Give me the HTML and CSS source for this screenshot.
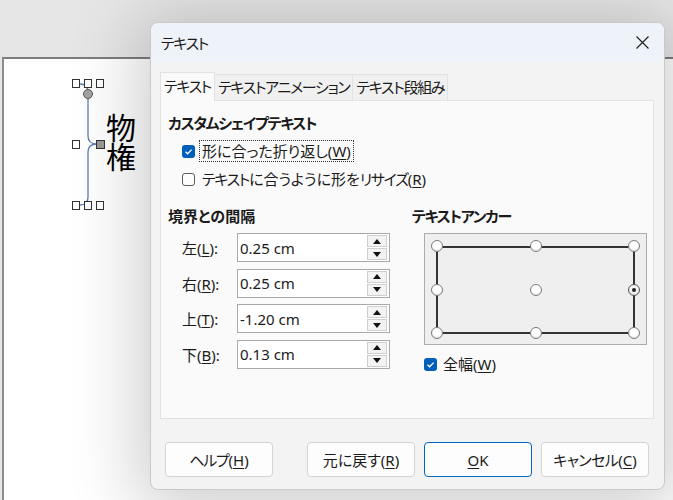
FILE: index.html
```html
<!DOCTYPE html>
<html lang="ja">
<head>
<meta charset="utf-8">
<title>テキスト</title>
<link rel="stylesheet" href="styles.css">
</head>
<body>
<div class="app">
  <div class="toparea"></div>
  <div class="page">
    <svg class="shape" width="120" height="160" viewBox="4 59 120 160">
      <path d="M80 84 Q88 84 88 92 L88 136 Q88 144 97 144 Q88 144 88 152 L88 197 Q88 205 80 205" fill="none" stroke="#5a7fb4" stroke-width="1.3"/>
      <rect x="72.5" y="79.5" width="7" height="8" fill="#fff" stroke="#333" stroke-width="1"/>
      <rect x="84.5" y="79.5" width="7" height="8" fill="#fff" stroke="#333" stroke-width="1"/>
      <rect x="96.5" y="79.5" width="7" height="8" fill="#fff" stroke="#333" stroke-width="1"/>
      <circle cx="88" cy="94" r="4.5" fill="#a3a3a3" stroke="#555" stroke-width="1"/>
      <rect x="72.5" y="140.5" width="7" height="8" fill="#fff" stroke="#333" stroke-width="1"/>
      <rect x="96.5" y="140.5" width="8" height="8" fill="#9a9a9a" stroke="#333" stroke-width="1"/>
      <rect x="72.5" y="201.5" width="7" height="8" fill="#fff" stroke="#333" stroke-width="1"/>
      <rect x="84.5" y="201.5" width="7" height="8" fill="#fff" stroke="#333" stroke-width="1"/>
      <rect x="96.5" y="201.5" width="7" height="8" fill="#fff" stroke="#333" stroke-width="1"/>
    </svg>
    <div class="shape-text">物権</div>
  </div>

  <div class="dialog">
    <div class="titlebar">
      <span class="title k">テキスト</span>
      <svg class="close" width="13" height="13" viewBox="0 0 13 13"><path d="M0.5 0.5 L12.5 12.5 M12.5 0.5 L0.5 12.5" stroke="#222" stroke-width="1.2" fill="none"/></svg>
    </div>
    <div class="dlg-body">
      <div class="tabs">
        <div class="tab active k">テキスト</div>
        <div class="tab k">テキストアニメーション</div>
        <div class="tab k">テキスト段組み</div>
      </div>
      <div class="panel">
        <div class="sec-title k">カスタムシェイプテキスト</div>
        <div class="check-row row-first">
          <span class="cb checked"><svg width="13" height="13" viewBox="0 0 13 13"><path d="M3.5 6.8 L5.6 8.8 L9.6 4.6" stroke="#fff" stroke-width="1.3" fill="none"/></svg></span>
          <span class="focus">形に合った折り返し(<u>W</u>)</span>
        </div>
        <div class="check-row row-second">
          <span class="cb"></span>
          <span class="cb-label"><span class="k">テキスト</span>に合うように形を<span class="k">リサイズ</span>(<u>R</u>)</span>
        </div>
        <div class="cols">
          <div class="col-left">
            <div class="sec-title">境界との間隔</div>
            <div class="fields">
              <div class="field">
                <span class="flabel">左(<u>L</u>):</span>
                <div class="spin"><span class="val">0.25 cm</span><div class="spin-btns"><span class="sb"><i class="tri-up"></i></span><span class="sb"><i class="tri-down"></i></span></div></div>
              </div>
              <div class="field">
                <span class="flabel">右(<u>R</u>):</span>
                <div class="spin"><span class="val">0.25 cm</span><div class="spin-btns"><span class="sb"><i class="tri-up"></i></span><span class="sb"><i class="tri-down"></i></span></div></div>
              </div>
              <div class="field">
                <span class="flabel">上(<u>T</u>):</span>
                <div class="spin"><span class="val">-1.20 cm</span><div class="spin-btns"><span class="sb"><i class="tri-up"></i></span><span class="sb"><i class="tri-down"></i></span></div></div>
              </div>
              <div class="field">
                <span class="flabel">下(<u>B</u>):</span>
                <div class="spin"><span class="val">0.13 cm</span><div class="spin-btns"><span class="sb"><i class="tri-up"></i></span><span class="sb"><i class="tri-down"></i></span></div></div>
              </div>
            </div>
          </div>
          <div class="col-right">
            <div class="sec-title k">テキストアンカー</div>
            <div class="anchor">
              <div class="anchor-rect"></div>
              <div class="anchor-pts">
                <span class="rb"></span><span class="rb"></span><span class="rb"></span>
                <span class="rb"></span><span class="rb"></span><span class="rb sel"></span>
                <span class="rb"></span><span class="rb"></span><span class="rb"></span>
              </div>
            </div>
            <div class="check-row row-full">
              <span class="cb checked"><svg width="13" height="13" viewBox="0 0 13 13"><path d="M3.5 6.8 L5.6 8.8 L9.6 4.6" stroke="#fff" stroke-width="1.3" fill="none"/></svg></span>
              <span class="cb-label">全幅(<u>W</u>)</span>
            </div>
          </div>
        </div>
      </div>
      <div class="buttons">
        <div class="btn"><span class="k">ヘルプ</span>(<u>H</u>)</div>
        <div class="btn-group">
          <div class="btn">元に戻す(<u>R</u>)</div>
          <div class="btn primary"><u>O</u>K</div>
          <div class="btn"><span class="k2">キャンセル</span>(<u>C</u>)</div>
        </div>
      </div>
    </div>
  </div>
</div>
</body>
</html>
```

FILE: styles.css
```css
* { box-sizing: border-box; }
html, body { margin: 0; padding: 0; }
body {
  width: 673px;
  height: 500px;
  overflow: hidden;
  font-family: "Noto Sans", "Noto Sans CJK JP", sans-serif;
  font-size: 15px;
  color: #1b1b1b;
  font-feature-settings: "palt";
  background: #e6e6e6;
}
u { text-decoration-thickness: 1px; text-underline-offset: 2px; }
.k { letter-spacing: -1.3px; }
.k2 { letter-spacing: -0.6px; }

.app {
  position: relative;
  width: 673px;
  height: 500px;
  display: flex;
  flex-direction: column;
}
.toparea { height: 57px; flex: none; background: #e6e6e6; }
.page {
  flex: 1;
  position: relative;
  margin-left: 2px;
  border-left: 2px solid #8e8e8e;
  border-top: 2px solid #7d7d7d;
  background: #fff;
}
.shape { position: absolute; left: 0; top: 0; }
.shape-text {
  position: absolute;
  left: 101px;
  top: 54px;
  writing-mode: vertical-rl;
  font-family: "Noto Sans CJK JP", sans-serif;
  font-size: 30px;
  line-height: 32px;
  letter-spacing: -1px;
  font-feature-settings: normal;
  color: #000;
}

/* dialog */
.dialog {
  position: absolute;
  left: 150px;
  top: 22px;
  width: 515px;
  height: 468px;
  border: 1px solid #c9c9c9;
  border-radius: 8px;
  background: #f3f3f3;
  box-shadow: 0 8px 70px 12px rgba(0,0,0,0.2);
  display: flex;
  flex-direction: column;
  overflow: hidden;
}
.titlebar {
  height: 39px;
  flex: none;
  background: #eef2f9;
  display: flex;
  align-items: center;
  justify-content: space-between;
  padding: 0 15px 0 10px;
}
.title { line-height: 20px; }
.close { display: block; }

.dlg-body {
  flex: 1;
  padding: 10px 10px 0 9px;
  display: flex;
  flex-direction: column;
}
.tabs {
  height: 28px;
  display: flex;
  align-items: flex-end;
  position: relative;
  z-index: 1;
}
.tab {
  height: 26px;
  padding: 0 3px;
  line-height: 24px;
  background: #f0f0f0;
  border: 1px solid #e2e2e2;
  border-bottom: none;
  margin-left: -1px;
  white-space: nowrap;
}
.tab.active {
  height: 29px;
  margin-left: 0;
  margin-bottom: -1px;
  background: #fafafa;
  line-height: 27px;
}
.panel {
  height: 319px;
  background: #fafafa;
  border: 1px solid #e2e2e2;
  padding: 12px 8px 0 7px;
}
.sec-title {
  font-weight: 700;
  line-height: 20px;
  white-space: nowrap;
}
.check-row {
  display: flex;
  align-items: center;
  height: 22px;
  margin-left: 14px;
  white-space: nowrap;
}
.row-first { margin-top: 7px; }
.row-second { margin-top: 6px; }
.cb {
  width: 13px;
  height: 13px;
  flex: none;
  border: 1px solid #5c5c5c;
  border-radius: 3px;
  background: #fdfdfd;
  display: block;
}
.cb.checked { border: none; background: #005fb8; }
.cb svg { display: block; }
.focus {
  margin-left: 4px;
  padding: 0 2px;
  border: 1px dotted #333;
  line-height: 20px;
}
.cb-label { margin-left: 7px; line-height: 20px; }

.cols {
  margin-top: 16px;
  display: grid;
  grid-template-columns: 244px 1fr;
}
.fields {
  margin-top: 7px;
  display: flex;
  flex-direction: column;
  gap: 6.5px;
}
.field {
  display: flex;
  align-items: center;
  height: 29px;
  padding-left: 14px;
}
.flabel { width: 55px; white-space: nowrap; }
.spin {
  width: 153px;
  height: 29px;
  border: 1px solid #a9a9a9;
  background: #fff;
  display: flex;
  align-items: center;
  padding: 0 2px 0 2px;
}
.val { white-space: nowrap; }
.spin-btns {
  margin-left: auto;
  display: flex;
  flex-direction: column;
  gap: 1px;
}
.sb {
  width: 20px;
  height: 12px;
  border: 1px solid #cfcfcf;
  background: #f3f3f3;
  display: flex;
  align-items: center;
  justify-content: center;
}
.tri-up, .tri-down { width: 0; height: 0; border-left: 4px solid transparent; border-right: 4px solid transparent; }
.tri-up { border-bottom: 5px solid #111; }
.tri-down { border-top: 5px solid #111; }

.anchor {
  position: relative;
  margin: 7px 0 0 12px;
  width: 223px;
  height: 112px;
  border: 1px solid #acacac;
  background: #efefef;
}
.anchor-rect {
  position: absolute;
  left: 11px;
  top: 12px;
  width: 199px;
  height: 88px;
  border: 2px solid #333;
}
.anchor-pts {
  position: absolute;
  left: 6px;
  top: 6px;
  width: 209px;
  height: 99px;
  display: grid;
  grid-template-columns: repeat(3, 12px);
  grid-template-rows: repeat(3, 12px);
  justify-content: space-between;
  align-content: space-between;
}
.rb {
  width: 12px;
  height: 12px;
  border-radius: 50%;
  background: #fff;
  border: 1px solid #7a7a7a;
  box-shadow: inset 0 -1px 1px rgba(0,0,0,0.12);
  display: flex;
  align-items: center;
  justify-content: center;
}
.rb.sel { border-color: #555; background: #f4f4f4; }
.rb.sel::after { content: ""; width: 4px; height: 4px; border-radius: 50%; background: #222; }
.row-full { margin: 8px 0 0 12px; }
.row-full .cb-label { margin-left: 6px; }

.buttons {
  margin-top: 23px;
  padding: 0 5px;
  display: flex;
  justify-content: space-between;
}
.btn-group { display: flex; gap: 9px; }
.btn {
  width: 108px;
  height: 35px;
  border: 1px solid #d3d3d3;
  border-radius: 4px;
  background: #fdfdfd;
  display: flex;
  align-items: center;
  justify-content: center;
  white-space: nowrap;
}
.btn.primary { border: 1px solid #0067c0; }
```
